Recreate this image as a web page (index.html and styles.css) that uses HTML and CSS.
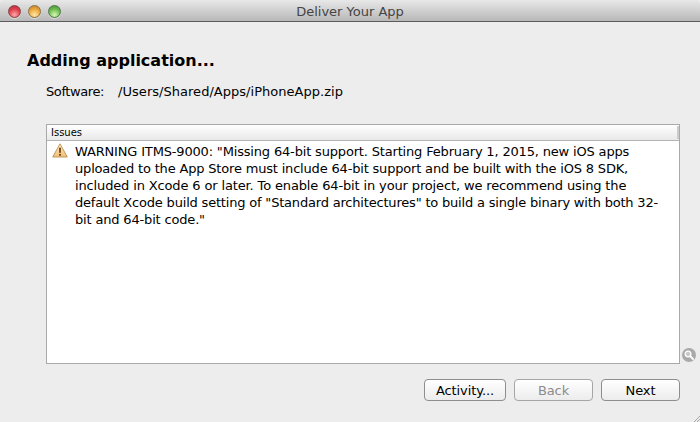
FILE: index.html
```html
<!DOCTYPE html>
<html lang="en">
<head>
<meta charset="utf-8">
<title>Deliver Your App</title>
<link rel="stylesheet" href="styles.css">
</head>
<body>
<div class="window">
  <header class="titlebar">
    <div class="lights">
      <span class="light red"></span>
      <span class="light yellow"></span>
      <span class="light green"></span>
    </div>
    <div class="title">Deliver Your App</div>
  </header>
  <main class="content">
    <h1 class="heading">Adding application...</h1>
    <div class="software">
      <span class="label">Software:</span>
      <span class="path">/Users/Shared/Apps/iPhoneApp.zip</span>
    </div>
    <div class="panel-row">
      <section class="panel">
        <div class="panel-head"><span>Issues</span><i class="grip"></i></div>
        <div class="issue">
          <svg class="warn" width="16" height="15" viewBox="0 0 16 15">
            <defs><linearGradient id="w" x1="0" y1="0" x2="0" y2="1"><stop offset="0" stop-color="#fdeec8"/><stop offset="1" stop-color="#f3bd74"/></linearGradient></defs>
            <path d="M8 .8 15.3 14H.7Z" fill="url(#w)" stroke="#c09a62" stroke-width="1" stroke-linejoin="round"/>
            <rect x="7.1" y="4.4" width="1.8" height="5.6" rx=".8" fill="#6e4518"/>
            <circle cx="8" cy="11.8" r="1.1" fill="#6e4518"/>
          </svg>
          <p class="issue-text"><span class="ln ln1">WARNING ITMS-9000: "Missing 64-bit support. Starting February 1, 2015, new iOS apps</span><span class="ln ln2">uploaded to the App Store must include 64-bit support and be built with the iOS 8 SDK,</span><span class="ln ln3">included in Xcode 6 or later. To enable 64-bit in your project, we recommend using the</span><span class="ln ln4">default Xcode build setting of "Standard architectures" to build a single binary with both 32-</span><span class="ln ln5">bit and 64-bit code."</span></p>
        </div>
      </section>
      <svg class="zoom" width="14" height="14" viewBox="0 0 14 14">
        <circle cx="7" cy="7" r="7" fill="#a9a9a9"/>
        <circle cx="6" cy="6" r="2.9" fill="#c9c9c9" stroke="#fff" stroke-width="1.3"/>
        <path d="M8.2 8.2 11 11" stroke="#fff" stroke-width="1.8" stroke-linecap="round"/>
      </svg>
    </div>
    <footer class="buttons">
      <button class="btn activity">Activity...</button>
      <button class="btn back" disabled>Back</button>
      <button class="btn next">Next</button>
    </footer>
  </main>
  <svg class="resize" width="7" height="7" viewBox="0 0 7 7">
    <path d="M7 1 1 7M7 4 4 7" stroke="#a8a8a8" stroke-width="1"/>
  </svg>
</div>
</body>
</html>
```
FILE: styles.css
```css
* { box-sizing: border-box; }
html, body { margin: 0; padding: 0; }
body { width: 700px; height: 422px; overflow: hidden; font-family: "DejaVu Sans", sans-serif; color: #000; background: #ededed; }
.window { position: relative; width: 700px; height: 422px; display: flex; flex-direction: column; }
.titlebar { position: relative; height: 22px; flex: none; background: linear-gradient(#e8e8e8, #b8b8b8); border-bottom: 1px solid #5c5c5c; border-radius: 4px 4px 0 0; display: flex; align-items: center; justify-content: center; }
.lights { position: absolute; left: 8px; top: 5px; display: flex; gap: 7px; }
.light { width: 13px; height: 13px; border-radius: 50%; border: 1px solid #666; box-shadow: 0 1px 0 rgba(255, 255, 255, .45); }
.red { background: radial-gradient(circle at 50% 80%, #ffa8a8, #e0404c 55%, #a82a34 100%); border-color: #8a4448; }
.yellow { background: radial-gradient(circle at 50% 80%, #ffe8a8, #eca83c 55%, #b57a24 100%); border-color: #8e7046; }
.green { background: radial-gradient(circle at 50% 80%, #d8f8b4, #6fbc50 55%, #44873a 100%); border-color: #4f7a48; }
.title { font-size: 13px; color: #444; padding-top: 1px; }
.content { flex: 1; display: flex; flex-direction: column; padding: 28px 20px 21px 27px; }
.heading { margin: 0; font-size: 16px; line-height: 22px; font-weight: 700; }
.software { margin: 11px 0 0 19px; font-size: 13px; line-height: 18px; display: flex; gap: 14px; }
.label { letter-spacing: -.4px; }
.path { letter-spacing: .03px; }
.panel-row { display: flex; margin: 23px 0 0 19px; align-items: flex-end; position: relative; }
.panel { width: 634px; height: 240px; background: #fff; border: 1px solid #a9a9a9; flex: none; }
.panel-head { height: 16px; background: linear-gradient(#fff, #e8e8e8); border-bottom: 1px solid #b5b5b5; font-size: 10px; line-height: 15px; padding-left: 4px; position: relative; }
.grip { position: absolute; right: 0; top: 1px; width: 2px; height: 13px; background: #ccc; }
.issue { display: flex; padding: 2px 4px 0 5px; gap: 7px; }
.warn { flex: none; }
.issue-text { margin: 0; font-size: 13px; line-height: 17px; white-space: nowrap; }
.ln { display: block; }
.ln1 { letter-spacing: -.17px; }
.ln2 { letter-spacing: -.18px; }
.ln3 { letter-spacing: -.14px; }
.ln4 { letter-spacing: -.19px; }
.ln5 { letter-spacing: -.17px; }
.zoom { position: absolute; right: -16px; bottom: 2px; }
.buttons { display: flex; justify-content: flex-end; gap: 8px; margin-top: 15px; }
.btn { height: 22px; border: 1px solid #8e8e8e; border-radius: 4px; background: linear-gradient(#fff, #ececec); font-family: inherit; font-size: 13px; letter-spacing: -.1px; color: #000; padding: 0; }
.activity { width: 82px; }
.back { width: 79px; color: #8c8c8c; border-color: #a6a6a6; }
.next { width: 79px; }
.resize { position: absolute; right: 0; bottom: 0; }
```
